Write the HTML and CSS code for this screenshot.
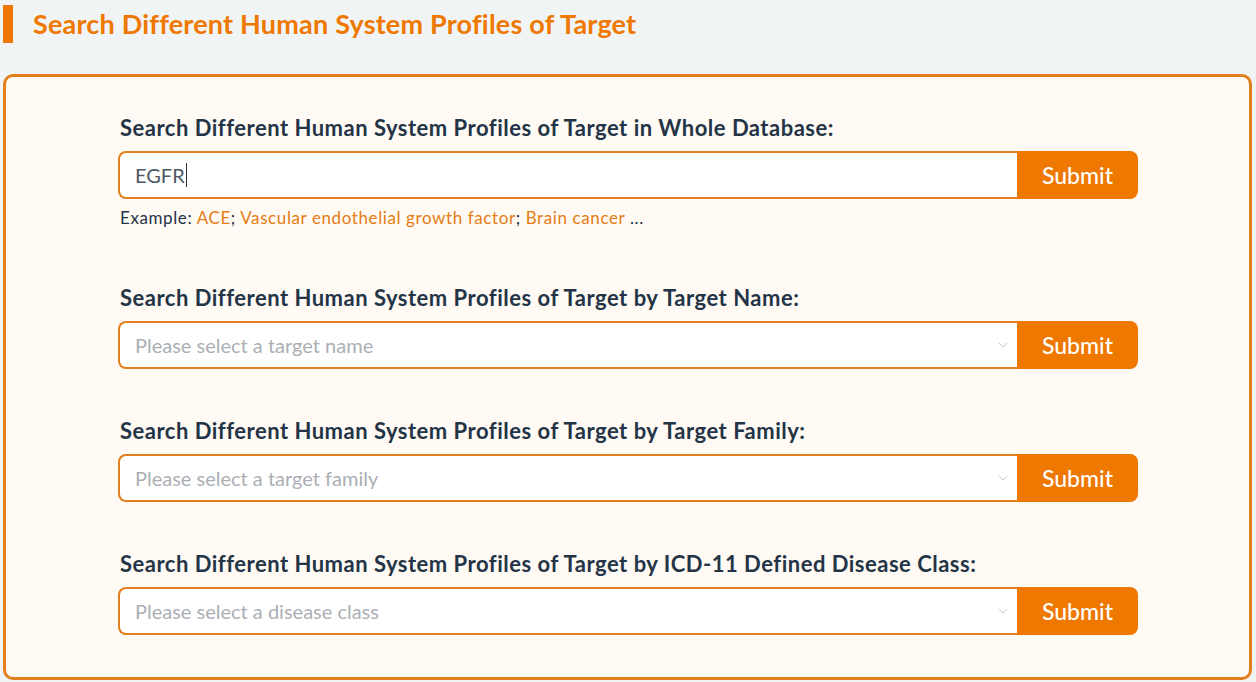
FILE: index.html
```html
<!DOCTYPE html>
<html lang="en">
<head>
<meta charset="utf-8">
<title>Search Different Human System Profiles of Target</title>
<link rel="stylesheet" href="styles.css">
</head>
<body>
<div class="page">
  <h1 class="title">Search Different Human System Profiles of Target</h1>
  <div class="card">
    <div class="group first">
      <div class="label">Search Different Human System Profiles of Target in Whole Database:</div>
      <div class="row">
        <div class="field"><span class="value">EGFR</span><span class="caret"></span></div>
        <button class="submit">Submit</button>
      </div>
      <div class="example">Example: <a>ACE</a>; <a>Vascular endothelial growth factor</a>; <a>Brain cancer</a> ...</div>
    </div>
    <div class="group">
      <div class="label">Search Different Human System Profiles of Target by Target Name:</div>
      <div class="row">
        <div class="field select"><span class="placeholder">Please select a target name</span><svg class="chev" width="10" height="6" viewBox="0 0 10 6"><path d="M1 1l4 4 4-4" fill="none" stroke="#c4c7cc" stroke-width="1"/></svg></div>
        <button class="submit">Submit</button>
      </div>
    </div>
    <div class="group">
      <div class="label">Search Different Human System Profiles of Target by Target Family:</div>
      <div class="row">
        <div class="field select"><span class="placeholder">Please select a target family</span><svg class="chev" width="10" height="6" viewBox="0 0 10 6"><path d="M1 1l4 4 4-4" fill="none" stroke="#c4c7cc" stroke-width="1"/></svg></div>
        <button class="submit">Submit</button>
      </div>
    </div>
    <div class="group">
      <div class="label">Search Different Human System Profiles of Target by ICD-11 Defined Disease Class:</div>
      <div class="row">
        <div class="field select"><span class="placeholder">Please select a disease class</span><svg class="chev" width="10" height="6" viewBox="0 0 10 6"><path d="M1 1l4 4 4-4" fill="none" stroke="#c4c7cc" stroke-width="1"/></svg></div>
        <button class="submit">Submit</button>
      </div>
    </div>
  </div>
</div>
</body>
</html>
```

FILE: styles.css
```css
* { box-sizing: border-box; }
html, body { margin: 0; padding: 0; }
body {
  background: #f1f4f5;
  font-family: Lato, "Noto Sans", sans-serif;
  width: 1256px;
  height: 682px;
  overflow: hidden;
}
.page { padding: 5px 4px 0 3px; }
.title {
  margin: 0;
  height: 38px;
  border-left: 10px solid #ee7800;
  padding-left: 20px;
  color: #ee7800;
  font-size: 27px;
  font-weight: 700;
  line-height: 38px;
  letter-spacing: 0.2px;
}
.card {
  margin-top: 31px;
  border: 3px solid #e27f1f;
  border-radius: 10px;
  background: #fffaf4;
  height: 606px;
  padding: 38px 0 0 114px;
}
.group { width: 1018px; margin-bottom: 49px; }
.group.first { margin-bottom: 57px; }
.label {
  color: #243447;
  font-size: 22px;
  font-weight: 700;
  line-height: 26px;
  margin-bottom: 10px;
  letter-spacing: 0.5px;
}
.row { display: flex; height: 48px; margin-left: -2px; }
.field {
  flex: 1;
  display: flex;
  align-items: center;
  background: #fff;
  border: 2px solid #e27f1f;
  border-right: none;
  border-radius: 8px 0 0 8px;
  padding: 0 9px 0 15px;
  font-size: 20px;
}
.value { color: #4f5862; }
.caret { width: 1px; height: 24px; background: #333; margin-left: 1px; }
.placeholder { color: #abafb5; flex: 1; }
.chev { display: block; }
.submit {
  width: 121px;
  border: none;
  background: #ee7800;
  color: #fff;
  font-family: Lato, "Noto Sans", sans-serif;
  font-size: 23px;
  font-weight: 500;
  border-radius: 0 8px 8px 0;
  padding: 0;
}
.example {
  margin-top: 9px;
  font-size: 17px;
  color: #243447;
  line-height: 20px;
  letter-spacing: 0.6px;
}
.example a { color: #e57c14; }
```
